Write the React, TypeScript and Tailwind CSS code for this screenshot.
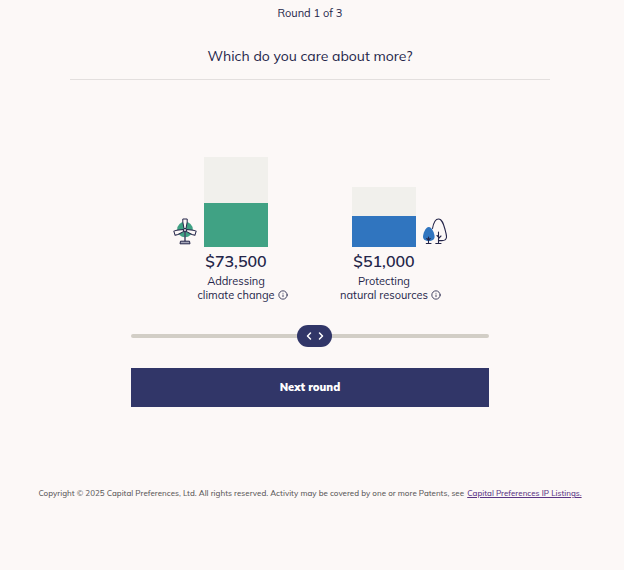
import React, { useState } from 'react';
import { ChevronLeft, ChevronRight, Info } from 'lucide-react';

const TurbineIcon: React.FC = () => (
  <svg className="w-6 h-7 shrink-0" viewBox="0 0 24 28" fill="none" aria-hidden="true">
    <circle cx="12" cy="11.5" r="7.8" fill="#40a284" />
    <g fill="#fcf8f7" stroke="#242549" strokeWidth="1" strokeLinejoin="round">
      <path d="M11.5 14h1v9.5h-1z" fill="#8d8ea6" strokeWidth="0.5" />
      <path d="M9.800 1h4.400v3l-1.200 6.500h-2L9.800 4z" />
      <path d="M9.800 1h4.400v3l-1.200 6.500h-2L9.800 4z" transform="rotate(-107 12 12)" />
      <path d="M9.800 1h4.400v3l-1.200 6.500h-2L9.800 4z" transform="rotate(107 12 12)" />
      <circle cx="12" cy="12" r="1.5" />
      <path d="M7.500 23.200h9l.5 2.600H7z" fill="#a5a6b8" />
    </g>
  </svg>
);

const TreesIcon: React.FC = () => (
  <svg className="w-6 h-7 shrink-0" viewBox="0 0 24 28" fill="none" strokeLinecap="round" aria-hidden="true">
    <path
      d="M9.5 10.500C10.500 5 12.500 1 15.500 1c3.600 0 5 5 6.400 10 .9 3.400 1.800 6.200 1.600 8.200-.3 2.400-2 3.400-4.500 3.400h-3"
      stroke="#242549"
      strokeWidth="1.1"
    />
    <path d="M15.500 14v11.500M15.500 20.500l2.500-2.500M15.500 19l-1.500-1.500M12.800 25.500h5.200" stroke="#242549" strokeWidth="1.1" />
    <path d="M5.800 9c3.200 0 5.800 6.500 5.800 9.800 0 2.800-2.300 4.200-5.800 4.200S0 21.600 0 18.800C0 15.500 2.600 9 5.800 9z" fill="#3075bf" />
    <path d="M5.500 19v6.500M5.500 22l-1.800-1.500M5.500 22l1.800-1.500M3.300 25.500h4.700" stroke="#242549" strokeWidth="1.1" />
  </svg>
);

interface ChoiceProps {
  lines: [string, string];
  amount: number;
  max: number;
  barClass: string;
  fillClass: string;
  icon: React.ReactNode;
  iconSide: 'left' | 'right';
}

const Choice: React.FC<ChoiceProps> = ({ lines, amount, max, barClass, fillClass, icon, iconSide }) => (
  <div className="w-[148px] flex flex-col items-center">
    <div className="flex items-end gap-[7px]">
      <div className="w-6 pb-px">{iconSide === 'left' && icon}</div>
      <div className={`w-16 flex flex-col justify-end bg-[#f1f0ec] ${barClass}`}>
        <div className={fillClass} style={{ height: `${(amount / max) * 100}%` }} />
      </div>
      <div className="w-6 pb-px">{iconSide === 'right' && icon}</div>
    </div>
    <p className="mt-[2px] mb-px text-[16px] leading-6 font-semibold">${amount.toLocaleString('en-US')}</p>
    <div className="text-[11px] leading-[14px] text-center whitespace-nowrap">
      <p>{lines[0]}</p>
      {/* the info button hangs outside so the label stays centred under the bar */}
      <p className="relative">
        {lines[1]}
        <button type="button" className="absolute left-full top-[2px] ml-[3px]" aria-label={`About ${lines.join(' ').toLowerCase()}`}>
          <Info className="w-[10px] h-[10px]" strokeWidth={2} />
        </button>
      </p>
    </div>
  </div>
);

const App: React.FC = () => {
  const [position, setPosition] = useState(514);

  const share = position / 1000;
  const climate = Math.round((1 - share) * 100) * 1500;
  const resources = Math.round(share * 100) * 1000;

  return (
    <div className="min-h-screen bg-[#fcf8f7] pr-1 text-[#242549] font-['Mulish','Lato',sans-serif]">
      <main className="flex flex-col items-center">
        <p className="pt-1 text-[11px] leading-[18px]">Round 1 of 3</p>

        <div className="w-full px-[70px]">
          <h1 className="mt-[22px] pb-[11px] border-b border-[#e3dfde] text-center text-[14px] leading-6">
            Which do you care about more?
          </h1>
        </div>

        <div className="mt-[77px] flex items-end justify-center">
          <Choice
            lines={['Addressing', 'climate change']}
            amount={climate}
            max={150000}
            barClass="h-[90px]"
            fillClass="bg-[#40a284]"
            icon={<TurbineIcon />}
            iconSide="left"
          />
          <Choice
            lines={['Protecting', 'natural resources']}
            amount={resources}
            max={100000}
            barClass="h-[60px]"
            fillClass="bg-[#3075bf]"
            icon={<TreesIcon />}
            iconSide="right"
          />
        </div>

        <div className="w-full max-w-[358px]">
          <div className="relative mt-[23px] h-[22px]">
            <input
              type="range"
              min={0}
              max={1000}
              value={position}
              onChange={(e) => setPosition(Number(e.target.value))}
              aria-label="Balance between the two causes"
              className="block w-full h-[22px] appearance-none bg-transparent cursor-pointer [&::-webkit-slider-runnable-track]:h-1 [&::-webkit-slider-runnable-track]:rounded-full [&::-webkit-slider-runnable-track]:bg-[#d2cec6] [&::-webkit-slider-thumb]:appearance-none [&::-webkit-slider-thumb]:w-[35px] [&::-webkit-slider-thumb]:h-[22px] [&::-webkit-slider-thumb]:-mt-[9px] [&::-webkit-slider-thumb]:rounded-full [&::-webkit-slider-thumb]:bg-[#313668]"
            />
            {/* arrows ride on top of the thumb */}
            <span
              className="absolute top-0 w-[35px] h-[22px] flex items-center justify-center text-white pointer-events-none"
              style={{ left: `calc((100% - 35px) * ${share})` }}
            >
              <ChevronLeft className="w-3 h-3" strokeWidth={3} />
              <ChevronRight className="w-3 h-3" strokeWidth={3} />
            </span>
          </div>

          <button type="button" className="mt-[21px] w-full h-[39px] bg-[#313668] text-white text-[11px] font-black">
            Next round
          </button>
        </div>
      </main>

      <footer className="pt-20 pb-4 text-center text-[8px] leading-3 font-medium text-[#5c5a5c]">
        Copyright © 2025 Capital Preferences, Ltd. All rights reserved. Activity may be covered by one or more Patents, see{' '}
        <a href="#patents" className="ml-px text-[#5b3585] underline">Capital Preferences IP Listings.</a>
      </footer>
    </div>
  );
};

export default App;
